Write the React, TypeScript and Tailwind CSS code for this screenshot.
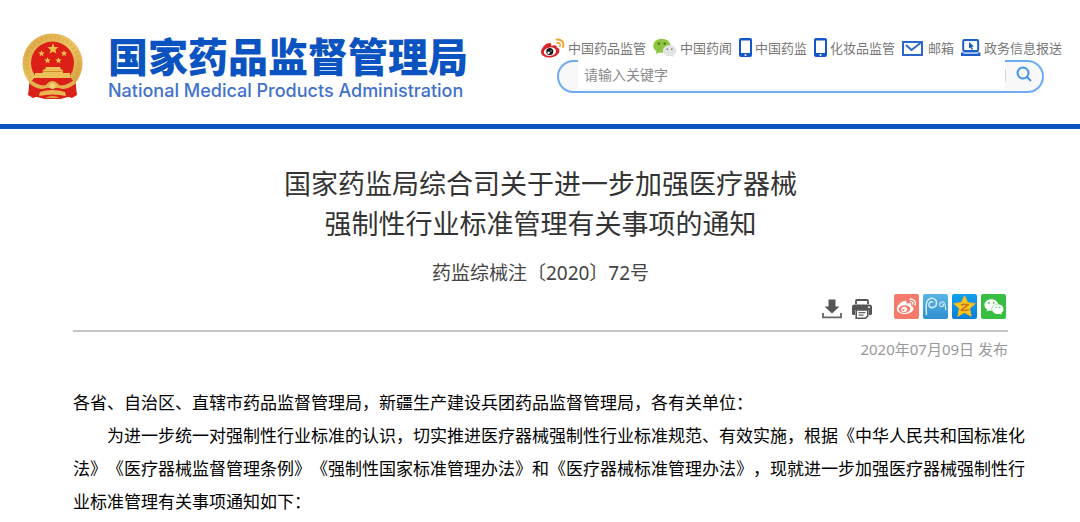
import { FaWeixin } from 'react-icons/fa'
import { RiWeiboFill } from 'react-icons/ri'

function Star({ x, y, r, fill }: { x: number; y: number; r: number; fill: string }) {
  const points = Array.from({ length: 10 }, (_, i) => {
    const radius = i % 2 === 0 ? r : r * 0.42
    const angle = (Math.PI / 5) * i - Math.PI / 2
    return `${x + radius * Math.cos(angle)},${y + radius * Math.sin(angle)}`
  }).join(' ')
  return <polygon points={points} fill={fill} />
}

function Emblem() {
  return (
    <svg viewBox="0 0 61 67" className="h-[67px] w-[61px] shrink-0" role="img" aria-label="国徽">
      <defs>
        <linearGradient id="gold" x1="0" y1="0" x2="1" y2="1">
          <stop offset="0" stopColor="#d9a441" />
          <stop offset="0.5" stopColor="#ecc564" />
          <stop offset="1" stopColor="#cf9733" />
        </linearGradient>
      </defs>
      <path d="M8 46 L53 46 L55 62 L50 65 L44 63 L38 66 H23 L17 63 L11 65 L6 62 Z" fill="#d9201a" />
      <circle cx="30.5" cy="30.5" r="30" fill="url(#gold)" />
      <circle cx="30.5" cy="30.5" r="26" fill="none" stroke="#c78f2e" strokeWidth="3" strokeDasharray="2 2.4" opacity="0.3" />
      <path d="M12 45 H49 L54 52 L54 62 L38 66 H23 L7 62 L7 52 Z" fill="#d9201a" />
      <circle cx="30.5" cy="30" r="21.5" fill="#dc1f17" />
      <Star x={31} y={16} r={6} fill="#f0c04a" />
      <Star x={19.5} y={20.5} r={3.4} fill="#f0c04a" />
      <Star x={42} y={20.5} r={3.4} fill="#f0c04a" />
      <Star x={25.5} y={27.5} r={3.4} fill="#f0c04a" />
      <Star x={36.5} y={27.5} r={3.4} fill="#f0c04a" />
      <path d="M24 34 H38 L39 36.500 H40.500 L41 40 H48 V45 H13 V40 H20.500 L21 36.500 H23 Z" fill="#ecc15a" />
      <path d="M21 38.500 H40" stroke="#c8811f" strokeWidth="0.8" />
      <path d="M9 47 Q18 54 24 52 Q30.500 44 37 52 Q43 54 52 47 L53 51 Q44 58 37 55 H24 Q17 58 8 51 Z" fill="#e3b24c" />
      <circle cx="30.500" cy="53" r="3" fill="#f2cf77" />
      <path d="M18 59 Q30.500 55 43 59 L44 63 Q30.500 60 17 63 Z" fill="#e9b94f" />
      <path d="M23 65 Q30.500 61 38 65 Z" fill="#dca63f" />
    </svg>
  )
}

function WeiboColorIcon() {
  return (
    <svg viewBox="0 0 24 20" className="h-5 w-6">
      <path d="M0 14 C0 10 5 5 8.500 5 C10.500 5 10.600 6.600 10 8 C13 6.800 16 6.800 15.800 9.600 C17.600 10.200 18.600 11.400 18.400 13 C18 17 13 19.500 8.500 19.500 C4 19.500 0 17.500 0 14 Z" fill="#d8232a" />
      <ellipse cx="9" cy="13.600" rx="6.200" ry="4.200" fill="#fff" transform="rotate(-8 9 13.600)" />
      <circle cx="8.800" cy="13.600" r="3.500" fill="#151515" />
      <circle cx="7.600" cy="14.700" r="1.200" fill="#fff" />
      <circle cx="10" cy="12.900" r="0.600" fill="#fff" />
      <path d="M15.500 1.600 C20.500 0.600 23.600 4.600 22 9" fill="none" stroke="#f0a030" strokeWidth="1.900" strokeLinecap="round" />
      <path d="M16 5 C18.500 4.500 19.800 6.300 19 8.500" fill="none" stroke="#f0a030" strokeWidth="1.600" strokeLinecap="round" />
    </svg>
  )
}

function WechatColorIcon() {
  return (
    <svg viewBox="0 0 24 20" className="h-5 w-6">
      <path d="M8.800 0.800 C4 0.800 0.300 3.800 0.300 7.800 C0.300 10.200 1.500 12.200 3.500 13.500 L2.600 16.200 L6 14.600 C11 15.600 17.500 13 17.500 7.800 C17.500 3.800 13.600 0.800 8.800 0.800 Z" fill="#8cc63f" />
      <path d="M16.600 7.200 C12.500 7.200 9.800 9.700 9.800 12.700 C9.800 16.200 13.500 18.800 18 17.900 L20.800 19.300 L20.200 17 C22.200 16 23.400 14.400 23.400 12.700 C23.400 9.700 20.500 7.200 16.600 7.200 Z" fill="#e3e3e3" />
      <circle cx="5.900" cy="5.600" r="1.200" fill="#4b6d1c" />
      <circle cx="11.800" cy="5.600" r="1.200" fill="#4b6d1c" />
      <circle cx="14.400" cy="11.200" r="0.900" fill="#8b8b8b" />
      <circle cx="18.800" cy="11.200" r="0.900" fill="#8b8b8b" />
    </svg>
  )
}

function PhoneIcon() {
  return (
    <svg viewBox="0 0 13 20" className="h-5 w-[13px]">
      <rect x="0" y="0" width="13" height="19" rx="2" fill="#1457c8" />
      <rect x="2" y="2.500" width="9" height="12.500" fill="#fff" />
      <circle cx="6.500" cy="17" r="1" fill="#fff" />
    </svg>
  )
}

function MailIcon() {
  return (
    <svg viewBox="0 0 23 20" className="h-5 w-[23px]">
      <rect x="1" y="4" width="19" height="13" fill="none" stroke="#2a66cc" strokeWidth="2" />
      <path d="M4 7 L9.500 12 L18.500 5" fill="none" stroke="#2a66cc" strokeWidth="2" />
    </svg>
  )
}

function LaptopIcon() {
  return (
    <svg viewBox="0 0 20 20" className="h-5 w-5">
      <rect x="2.200" y="2" width="15" height="11" rx="1.200" fill="none" stroke="#1d5cc9" strokeWidth="2" />
      <path d="M0 14.500 H19.400 V18 H0 Z" fill="#1d5cc9" />
      <path d="M2.500 15.400 H17" stroke="#fff" strokeWidth="0.700" />
      <path d="M8 4 L13 8.300 L10.800 8.700 L12 11.200 L10.500 11.800 L9.400 9.400 L8 10.600 Z" fill="#1d5cc9" />
    </svg>
  )
}

function DownloadIcon() {
  return (
    <svg viewBox="0 0 20 20" className="size-5">
      <path d="M6.500 0.500 H13.500 V7.500 H17.500 L10 14.500 L2.500 7.500 H6.500 Z" fill="#555" />
      <path d="M1 14 V18.400 H19 V14" fill="none" stroke="#666" strokeWidth="1.800" />
    </svg>
  )
}

function PrintIcon() {
  return (
    <svg viewBox="0 0 20 20" className="size-5">
      <path d="M4 5 V1.900 Q4 1 5 1 H15 Q16 1 16 1.900 V5" fill="none" stroke="#555" strokeWidth="1.800" />
      <path d="M2.500 5.500 H17.500 Q20 5.500 20 8 V14.500 Q20 16 18.500 16 H17 V11 H3 V16 H1.500 Q0 16 0 14.500 V8 Q0 5.500 2.500 5.500 Z" fill="#555" />
      <circle cx="17" cy="8.200" r="1" fill="#fff" />
      <path d="M4.200 11 H15.800 V17 L13.500 19.200 H4.200 Z" fill="#fff" stroke="#555" strokeWidth="1.600" />
      <path d="M6.500 13.600 H13.500 M6.500 16.200 H11.500" stroke="#666" strokeWidth="1.200" />
    </svg>
  )
}

function TencentWeiboIcon() {
  return (
    <svg viewBox="0 0 25 25" className="size-[25px]" fill="none" stroke="#d6ecfa" strokeLinecap="round">
      <path d="M3.500 20.500 C3 15 2.500 9 4.500 6.500 C7 3 13.500 3.500 13.500 9 C13.500 14 7 15 6 11.500 C5.300 9 7.500 7 9.500 8.200" strokeWidth="1.500" />
      <path d="M23 15.800 C21.800 13.500 23 8 19.800 7.800 C15.800 7.600 15.500 12.500 18.700 12.600 C21 12.600 21 9.700 19.200 9.700" strokeWidth="1.100" />
    </svg>
  )
}

function QzoneIcon() {
  return (
    <svg viewBox="0 0 25 25" className="size-[25px]">
      <path d="M12.500 1.800 L15.700 8.700 L23.200 9.500 L17.600 14.600 L19.200 22.200 L12.500 18.500 L5.800 22.200 L7.400 14.600 L1.800 9.500 L9.300 8.700 Z" fill="#fbc81f" stroke="#f9b815" strokeWidth="1" strokeLinejoin="round" />
      <path d="M8.800 11 Q12 10 16.200 10.800 L9.200 16.200 Q13 17 16.800 15.800" fill="none" stroke="#c8761a" strokeWidth="1.700" strokeLinejoin="round" />
    </svg>
  )
}

const navLinks = [
  { label: '中国药品监管', icon: <WeiboColorIcon /> },
  { label: '中国药闻', icon: <WechatColorIcon /> },
  { label: '中国药监', icon: <PhoneIcon /> },
  { label: '化妆品监管', icon: <PhoneIcon /> },
  { label: '邮箱', icon: <MailIcon /> },
  { label: '政务信息报送', icon: <LaptopIcon /> },
]

export default function App() {
  return (
    <div
      lang="zh-CN"
      className="bg-white font-['Noto_Sans','Noto_Sans_CJK_SC',sans-serif] [text-spacing-trim:space-all]"
    >
      {/* 页头 */}
      <header className="flex items-start justify-between border-b-5 border-[#0b53c1] pb-5 pl-[22px] pr-[18px]">
        <a href="#" className="flex items-start gap-[25px] pt-[33px]">
          <Emblem />
          <div className="whitespace-nowrap text-[#0b53c1]">
            <div className="font-['Noto_Sans_CJK_SC',sans-serif] text-[40px]/[45px] font-black">
              国家药品监督管理局
            </div>
            <div className="font-['Inter',sans-serif] text-[18px]/[26px] font-medium text-[#3f72ca]">
              National Medical Products Administration
            </div>
          </div>
        </a>

        <div className="pt-[38px]">
          <nav className="flex gap-[7px] text-[13px]/[20px] text-[#777]">
            {navLinks.map((link) => (
              <a key={link.label} href="#" className="flex items-center gap-[3px] whitespace-nowrap">
                {link.icon}
                {link.label}
              </a>
            ))}
          </nav>
          <form
            role="search"
            className="ml-4 mr-[18px] mt-[2px] flex h-[33px] rounded-full border-2 border-[#6dabf5] bg-[#f8f8f8] pl-[19px]"
          >
            <input
              type="text"
              aria-label="请输入关键字"
              placeholder="请输入关键字"
              className="-mt-[2px] h-[29px] min-w-0 flex-1 bg-white pl-[6px] text-[14px] outline-none placeholder:text-[#8a8a8a]"
            />
            <span className="mt-[7px] h-[13px] w-px bg-[#d5d5d5]"></span>
            <button type="submit" aria-label="搜索" className="flex w-[36px] items-start justify-center pt-1">
              <svg viewBox="0 0 16 16" className="size-4" fill="none" stroke="#4090ee" strokeWidth="2">
                <circle cx="7" cy="7" r="5.500" />
                <path d="M11 11 L15 15" />
              </svg>
            </button>
          </form>
        </div>
      </header>

      {/* 正文 */}
      <main>
        <div className="pl-[73px] pr-[72px] pt-[35px]">
          <h1 className="text-center text-[27px]/[40px] text-[#333]">
            国家药监局综合司关于进一步加强医疗器械
            <br />
            强制性行业标准管理有关事项的通知
          </h1>
          <p className="pt-[17px] text-center text-[19px]/[24px] text-[#444]">药监综械注〔2020〕72号</p>

          <div className="flex items-center justify-end gap-[10px] border-b-2 border-[#c4c4c4] pb-[11px] pr-[2px] pt-[9px]">
            <button type="button" aria-label="下载" className="pt-1">
              <DownloadIcon />
            </button>
            <button type="button" aria-label="打印" className="pt-1">
              <PrintIcon />
            </button>
            <div className="flex gap-1 pl-3">
              <button type="button" aria-label="分享到微博" className="flex size-[25px] items-center justify-center rounded-xs bg-[#f57a6b] text-[21px] text-white">
                <RiWeiboFill />
              </button>
              <button type="button" aria-label="分享到腾讯微博" className="rounded-xs bg-linear-to-b from-[#5cb5e6] to-[#2f8fd0]">
                <TencentWeiboIcon />
              </button>
              <button type="button" aria-label="分享到QQ空间" className="rounded-xs bg-linear-to-b from-[#0fa0f0] to-[#0a7fdc]">
                <QzoneIcon />
              </button>
              <button type="button" aria-label="分享到微信" className="flex size-[25px] items-center justify-center rounded-xs bg-[#38bf41] text-[20px] text-white">
                <FaWeixin />
              </button>
            </div>
          </div>
          <p className="pt-[6px] text-right text-[15px]/[22px] text-[#999]">2020年07月09日 发布</p>
        </div>

        <div className="pl-[73px] pr-[52px] pt-[26px] text-[17px]/[33px] text-black">
          <p>各省、自治区、直辖市药品监督管理局，新疆生产建设兵团药品监督管理局，各有关单位：</p>
          <p className="indent-[2em]">
            为进一步统一对强制性行业标准的认识，切实推进医疗器械强制性行业标准规范、有效实施，根据《中华人民共和国标准化法》《医疗器械监督管理条例》《强制性国家标准管理办法》和《医疗器械标准管理办法》，现就进一步加强医疗器械强制性行业标准管理有关事项通知如下：
          </p>
        </div>
      </main>
    </div>
  )
}
